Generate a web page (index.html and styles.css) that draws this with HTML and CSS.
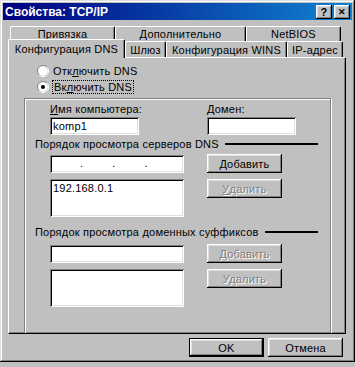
FILE: index.html
```html
<!DOCTYPE html>
<html lang="ru">
<head>
  <meta charset="UTF-8">
  <title>Свойства: TCP/IP</title>
  <link rel="stylesheet" href="styles.css">
</head>
<body>
  <div class="window">
    <div class="titlebar">
      <span class="title">Свойства: TCP/IP</span>
      <div class="title-buttons">
        <span class="tb-btn">?</span>
        <span class="tb-btn close">&#x2715;</span>
      </div>
    </div>

    <div class="tabs">
      <div class="tab-row back">
        <div class="tab w105">Привязка</div>
        <div class="tab w131">Дополнительно</div>
        <div class="tab w95">NetBIOS</div>
      </div>
      <div class="tab-row front">
        <div class="tab selected w117">Конфигурация DNS</div>
        <div class="tab w41">Шлюз</div>
        <div class="tab w121">Конфигурация WINS</div>
        <div class="tab w56">IP-адрес</div>
      </div>
    </div>

    <div class="panel">
      <div class="radios">
        <label class="radio">
          <svg width="12" height="12" viewBox="0 0 12 12">
            <circle cx="6" cy="6" r="5.5" fill="#fff" stroke="#808080"/>
            <path d="M10 2 A5.5 5.5 0 0 1 2 10" fill="none" stroke="#fff"/>
          </svg>
          <span>Отк<u>л</u>ючить DNS</span>
        </label>
        <label class="radio">
          <svg width="12" height="12" viewBox="0 0 12 12">
            <circle cx="6" cy="6" r="5.5" fill="#fff" stroke="#808080"/>
            <path d="M10 2 A5.5 5.5 0 0 1 2 10" fill="none" stroke="#fff"/>
            <circle cx="6" cy="6" r="2" fill="#000"/>
          </svg>
          <span class="focus">Вк<u>л</u>ючить DNS</span>
        </label>
      </div>

      <div class="group">
        <div class="names">
          <div class="field-col first">
            <div class="label"><u>И</u>мя компьютера:</div>
            <div class="field w89">komp1</div>
          </div>
          <div class="field-col">
            <div class="label">Домен:</div>
            <div class="field w89"></div>
          </div>
        </div>

        <div class="heading">
          <span>Порядок просмотра серверов DNS</span>
          <span class="rule"></span>
        </div>
        <div class="section">
          <div class="left-col">
            <div class="field ip"><span>.</span><span>.</span><span>.</span></div>
            <div class="field list">192.168.0.1</div>
          </div>
          <div class="right-col">
            <div class="btn"><u>Д</u>обавить</div>
            <div class="btn disabled"><u>У</u>далить</div>
          </div>
        </div>

        <div class="heading suffix">
          <span>Порядок просмотра доменных суффиксов</span>
          <span class="rule"></span>
        </div>
        <div class="section low">
          <div class="left-col">
            <div class="field"></div>
            <div class="field list"></div>
          </div>
          <div class="right-col">
            <div class="btn disabled">Добавить</div>
            <div class="btn disabled">Удалить</div>
          </div>
        </div>
      </div>
    </div>

    <div class="footer">
      <div class="btn default">OK</div>
      <div class="btn">Отмена</div>
    </div>
  </div>
</body>
</html>
```

FILE: styles.css
```css
body {
  margin: 0;
  background-color: #c0c0c0;
  font-family: "Liberation Sans", Arial, sans-serif;
  font-size: 11px;
  letter-spacing: 0.2px;
  color: #000;
}

.window {
  width: 355px;
  height: 362px;
  box-sizing: border-box;
  padding: 3px;
  background-color: #c0c0c0;
  box-shadow: inset -1px -1px #000, inset 1px 1px #dfdfdf, inset -2px -2px #808080, inset 2px 2px #fff;
}

.titlebar {
  height: 17px;
  display: flex;
  align-items: center;
  justify-content: space-between;
  padding: 0 2px 0 2px;
  background: linear-gradient(to right, #000080, #1084d0);
  color: #fff;
}

.title {
  font-weight: bold;
  font-size: 12px;
  letter-spacing: 0;
}

.title-buttons {
  display: flex;
  gap: 2px;
}

.tb-btn {
  width: 16px;
  height: 14px;
  box-sizing: border-box;
  display: flex;
  align-items: center;
  justify-content: center;
  background-color: #c0c0c0;
  color: #000;
  font-weight: bold;
  font-size: 11px;
  box-shadow: inset -1px -1px #000, inset 1px 1px #fff, inset -2px -2px #808080, inset 2px 2px #dfdfdf;
}

.tb-btn.close {
  font-size: 9px;
}

/* tabs */
.tabs {
  margin-top: 6px;
}

.tab-row {
  display: flex;
}

.tab-row.back {
  margin-left: 7px;
  height: 15px;
}

.tab-row.front {
  margin-left: 5px;
  height: 16px;
}

.tab {
  box-sizing: border-box;
  display: flex;
  align-items: center;
  justify-content: center;
  border-top: 1px solid #fff;
  border-left: 1px solid #fff;
  border-right: 1px solid #000;
  border-radius: 2px 2px 0 0;
  box-shadow: inset -1px 0 #808080;
  white-space: nowrap;
}

.tab.selected {
  position: relative;
  z-index: 1;
  height: 19px;
  margin-top: -2px;
  margin-bottom: -1px;
  background-color: #c0c0c0;
}

.w105 { width: 105px; }
.w131 { width: 131px; }
.w95 { width: 95px; }
.w117 { width: 117px; }
.w41 { width: 41px; }
.w121 { width: 121px; }
.w56 { width: 56px; }
.w89 { width: 89px; }

.panel {
  margin-left: 5px;
  width: 338px;
  height: 277px;
  box-sizing: border-box;
  border-top: 1px solid #fff;
  border-left: 1px solid #fff;
  border-right: 1px solid #000;
  border-bottom: 1px solid #000;
  box-shadow: inset -1px -1px #808080;
  padding: 7px 0 0 15px;
  overflow: hidden;
}

.radios {
  display: flex;
  flex-direction: column;
  gap: 4px;
  padding-left: 13px;
}

.radio {
  display: flex;
  align-items: center;
  gap: 4px;
  height: 12px;
}

.focus {
  outline: 1px dotted #000;
  padding: 0 1px;
}

.group {
  margin-top: 5px;
  width: 307px;
  height: 236px;
  box-sizing: border-box;
  border: 1px solid #808080;
  box-shadow: inset 1px 1px #fff, 1px 1px #fff;
  padding: 4px 0 0 25px;
}

.names {
  display: flex;
}

.field-col {
  flex-shrink: 0;
}

.field-col.first {
  width: 157px;
}

.label {
  height: 14px;
  line-height: 13px;
  white-space: nowrap;
}

.field {
  box-sizing: border-box;
  height: 18px;
  background-color: #fff;
  box-shadow: inset 1px 1px #808080, inset -1px -1px #fff, inset 2px 2px #000, inset -2px -2px #dfdfdf;
  padding: 2px 3px;
  line-height: 14px;
}

.heading {
  display: flex;
  align-items: center;
  width: 283px;
  margin: 2px 0 0 -15px;
  height: 14px;
  white-space: nowrap;
}

.heading .rule {
  flex: 1;
  height: 2px;
  background-color: #000;
  margin-left: 6px;
}

.heading.suffix {
  margin-top: 8px;
}

.section {
  display: flex;
  gap: 23px;
  margin-top: 3px;
}

.section.low {
  margin-top: 5px;
}

.left-col {
  width: 134px;
  display: flex;
  flex-direction: column;
  gap: 6px;
  padding-top: 1px;
}

.field.ip {
  display: flex;
  gap: 29px;
  padding: 1px 0 0 30px;
}

.field.list {
  height: 38px;
}

.right-col {
  display: flex;
  flex-direction: column;
  gap: 6px;
}

.btn {
  width: 75px;
  height: 19px;
  box-sizing: border-box;
  display: flex;
  align-items: center;
  justify-content: center;
  background-color: #c0c0c0;
  box-shadow: inset -1px -1px #000, inset 1px 1px #fff, inset -2px -2px #808080, inset 2px 2px #dfdfdf;
}

.btn.disabled {
  color: #808080;
  text-shadow: 1px 1px #fff;
}

.btn.default {
  border: 1px solid #000;
}

.footer {
  display: flex;
  justify-content: flex-end;
  gap: 4px;
  margin-top: 4px;
  padding-right: 9px;
}
```
